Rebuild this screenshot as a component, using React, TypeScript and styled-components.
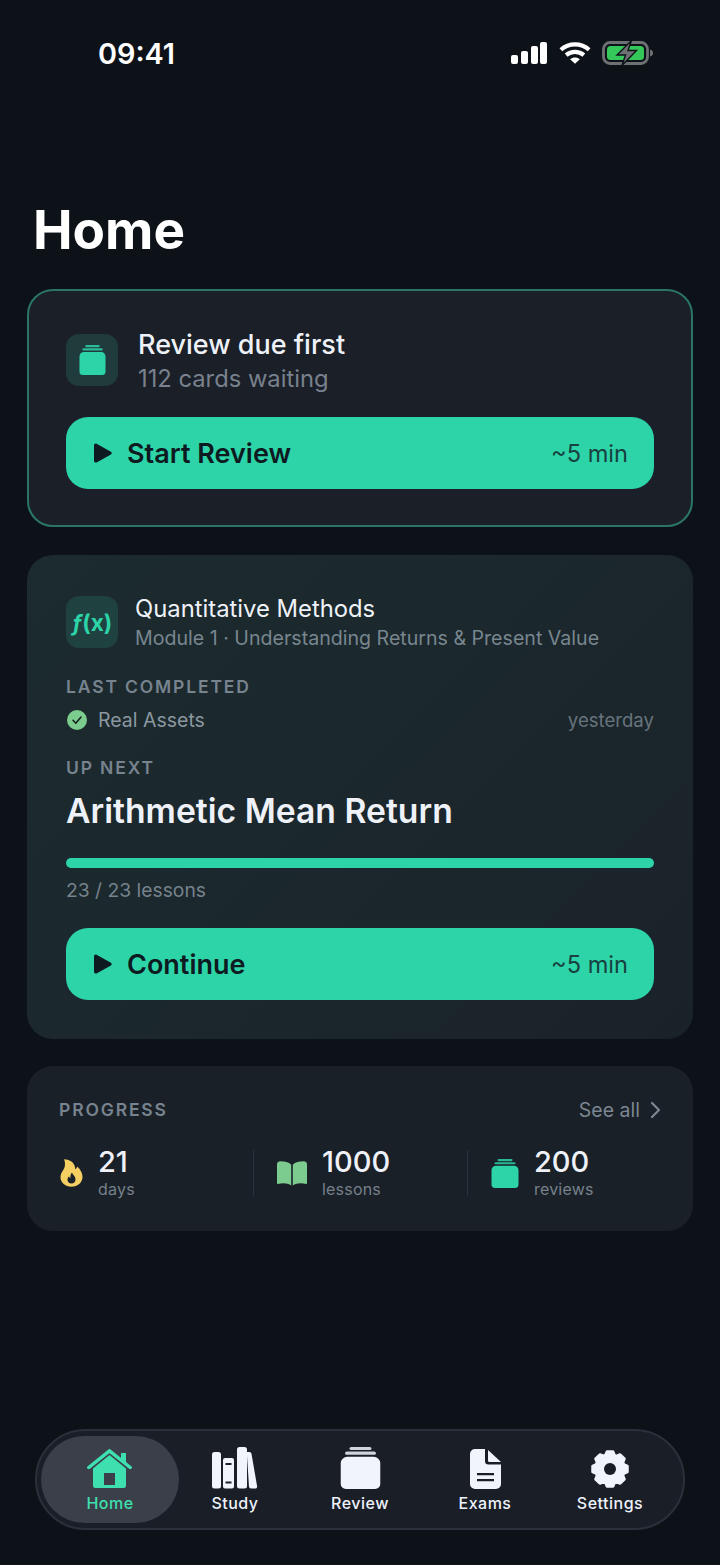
import React from "react";
import styled, { createGlobalStyle } from "styled-components";

const GlobalStyle = createGlobalStyle`
  html, body {
    margin: 0;
    padding: 0;
    background: #0d1219;
  }
  * {
    box-sizing: border-box;
  }
`;

const Screen = styled.div`
  width: 720px;
  height: 1565px;
  background: #0d1219;
  font-family: Inter, "Liberation Sans", sans-serif;
  color: #f1f4fa;
  display: flex;
  flex-direction: column;
  overflow: hidden;
`;

const StatusBar = styled.div`
  height: 106px;
  padding: 0 66px 0 98px;
  display: flex;
  align-items: center;
  justify-content: space-between;
`;

const Clock = styled.div`
  font-size: 28.8px;
  font-weight: 600;
  color: #ffffff;
`;

const StatusIcons = styled.div`
  display: flex;
  align-items: center;
  gap: 11px;
`;

const Title = styled.h1`
  margin: 0;
  height: 183px;
  padding: 94px 0 0 33px;
  font-size: 53px;
  line-height: 60px;
  font-weight: 700;
  color: #ffffff;
`;

const Cards = styled.div`
  display: flex;
  flex-direction: column;
  padding: 0 27px;
`;

const ReviewCard = styled.section`
  height: 238px;
  margin-bottom: 28px;
  padding: 36px 37px 0;
  background: #1a1f28;
  border: 2px solid #2a7564;
  border-radius: 26px;
`;

const CourseCard = styled.section`
  height: 484px;
  margin-bottom: 27px;
  padding: 37px 39px 0;
  border-radius: 26px;
  background: linear-gradient(135deg, #1c2b2f 0%, #1b272c 55%, #1a2229 100%);
`;

const HeaderRow = styled.div<{ $gap: number }>`
  display: flex;
  align-items: center;
  gap: ${({ $gap }) => $gap}px;
`;

const IconTile = styled.div<{ $bg: string }>`
  width: 52px;
  height: 52px;
  border-radius: 13px;
  background: ${({ $bg }) => $bg};
  display: flex;
  align-items: center;
  justify-content: center;
`;

const FxMark = styled.span`
  font-size: 22.5px;
  font-weight: 700;
  color: #2dd4a8;
`;

const FxLetter = styled.span`
  font-style: italic;
`;

const HeaderText = styled.div<{ $gap: number; $top: number }>`
  display: flex;
  flex-direction: column;
  gap: ${({ $gap }) => $gap}px;
  padding-top: ${({ $top }) => $top}px;
`;

const HeaderTitle = styled.div<{ $weight: number; $size: number; $line: number }>`
  font-size: ${({ $size }) => $size}px;
  font-weight: ${({ $weight }) => $weight};
  line-height: ${({ $line }) => $line}px;
  color: #eef2f8;
`;

const HeaderSub = styled.div<{ $size: number; $color: string }>`
  font-size: ${({ $size }) => $size}px;
  line-height: 28px;
  color: ${({ $color }) => $color};
`;

const ActionButton = styled.button<{ $top: number }>`
  width: 100%;
  height: 72px;
  margin-top: ${({ $top }) => $top}px;
  padding: 0 26px 0 27px;
  border: 0;
  border-radius: 22px;
  background: #2dd4a8;
  font-family: inherit;
  color: #0d1a1f;
  display: flex;
  align-items: center;
  justify-content: space-between;
`;

const ButtonLabel = styled.span`
  display: flex;
  align-items: center;
  gap: 15px;
  font-size: 27px;
  font-weight: 600;
`;

const ButtonTime = styled.span`
  font-size: 23.6px;
  font-weight: 400;
  color: #17423f;
`;

const SectionLabel = styled.div<{ $top?: number }>`
  margin-top: ${({ $top }) => $top ?? 0}px;
  font-size: 17.5px;
  line-height: 22px;
  font-weight: 600;
  letter-spacing: 1.85px;
  color: #77838f;
`;

const CompletedRow = styled.div`
  margin-top: 9px;
  height: 26px;
  display: flex;
  align-items: center;
  justify-content: space-between;
`;

const CompletedName = styled.span`
  display: flex;
  align-items: center;
  gap: 11px;
  padding-left: 1px;
  font-size: 19.5px;
  color: #8b97a1;
`;

const Muted = styled.span`
  font-size: 18.6px;
  color: #67737d;
`;

const NextTitle = styled.div`
  margin-top: 10px;
  font-size: 33.7px;
  line-height: 44px;
  font-weight: 600;
  color: #eef2f8;
`;

const Track = styled.div`
  margin-top: 25px;
  height: 10px;
  border-radius: 5px;
  background: #2dd4a8;
`;

const LessonCount = styled.div`
  margin-top: 9px;
  font-size: 19.3px;
  line-height: 26px;
  color: #76828c;
`;

const ProgressCard = styled.section`
  height: 165px;
  padding: 32px 32px 0;
  border-radius: 26px;
  background: #1a2028;
`;

const ProgressHead = styled.div`
  display: flex;
  align-items: center;
  justify-content: space-between;
`;

const SeeAll = styled.span`
  display: flex;
  align-items: center;
  gap: 10px;
  font-size: 19.5px;
  color: #7d8791;
`;

const Stats = styled.div`
  margin-top: 28px;
  display: grid;
  grid-template-columns: 194px 214px 1fr;
`;

const Stat = styled.div<{ $divider?: boolean; $pad: number }>`
  display: flex;
  align-items: center;
  gap: 15px;
  height: 46px;
  padding-left: ${({ $pad }) => $pad}px;
  border-left: ${({ $divider }) => ($divider ? "1px solid #2a323b" : "0")};
`;

const StatText = styled.div`
  display: flex;
  flex-direction: column;
`;

const StatValue = styled.div`
  font-size: 29px;
  line-height: 32px;
  font-weight: 500;
  color: #eef1f7;
`;

const StatLabel = styled.div`
  font-size: 16px;
  line-height: 23px;
  letter-spacing: 0.2px;
  color: #76808a;
`;

const Spacer = styled.div`
  flex: 1;
`;

const NavBar = styled.nav`
  margin: 0 35px 35px;
  height: 101px;
  padding: 5px 10.5px;
  border-radius: 51px;
  background: #1a1e27;
  border: 2px solid #2b303a;
  display: grid;
  grid-template-columns: repeat(5, 125px);
  align-items: stretch;
`;

const NavItem = styled.div<{ $active?: boolean }>`
  margin: ${({ $active }) => ($active ? "0 -6.5px" : "0")};
  padding-top: 11px;
  display: flex;
  flex-direction: column;
  align-items: center;
  border-radius: 44px;
  background: ${({ $active }) => ($active ? "#3a3f49" : "transparent")};
  color: ${({ $active }) => ($active ? "#3ee0b0" : "#eef2fb")};
  font-size: 16px;
  line-height: 20px;
  font-weight: 500;
  letter-spacing: 0.5px;
`;

const NavIconBox = styled.div`
  height: 42px;
  margin-bottom: 4px;
  display: flex;
  align-items: flex-end;
  justify-content: center;
`;

const SignalIcon = () => (
  <svg width="38" height="24" viewBox="0 0 38 24" fill="#fff">
    <rect x="1" y="14" width="7" height="9" rx="2" />
    <rect x="11" y="10" width="7" height="13" rx="2" />
    <rect x="21" y="5" width="7" height="18" rx="2" />
    <rect x="30" y="1" width="7" height="22" rx="2" />
  </svg>
);

const WifiIcon = () => (
  <svg width="32" height="24" viewBox="0 0 34 24" fill="none" stroke="#fff" strokeWidth="4.4">
    <path d="M2 8.500C10.500 1 23.500 1 32 8.500" />
    <path d="M7.600 14.200C13 9.600 21 9.600 26.400 14.200" />
    <path d="M17 23.500L11.800 18.600C14.800 16.200 19.200 16.200 22.200 18.600Z" fill="#fff" stroke="none" />
  </svg>
);

const BatteryIcon = () => (
  <svg width="52" height="26" viewBox="0 0 52 26">
    <rect x="1.500" y="2.500" width="44" height="21" rx="6.500" fill="none" stroke="#6d7174" strokeWidth="2.800" />
    <rect x="5" y="6" width="37" height="14" rx="3.500" fill="#34c759" />
    <path d="M48 9.500c2 .4 3 1.800 3 3.500s-1 3.100-3 3.500z" fill="#6d7174" />
    <path d="M29.500 0.500L15 15h8.500L20 25.500 34.500 10.500H26z" fill="#6d7174" stroke="#0d1219" strokeWidth="1.400" />
  </svg>
);

const StackIcon = ({ width, height, color }: { width: number; height: number; color: string }) => (
  <svg width={width} height={height} viewBox="0 0 28 30" preserveAspectRatio="none" fill={color}>
    <rect x="6.500" y="0" width="15" height="2.200" rx="1.100" opacity="0.85" />
    <rect x="3.500" y="3.300" width="21" height="2.200" rx="1.100" opacity="0.85" />
    <path d="M5 7h18a4.500 4.500 0 0 1 4.500 4.500V26.500a3.500 3.500 0 0 1-3.500 3.500H4A3.500 3.500 0 0 1 .5 26.500V11.500A4.500 4.500 0 0 1 5 7z" />
  </svg>
);

const PlayIcon = () => (
  <svg width="19" height="20" viewBox="0 0 19 20" fill="#0d1a1f">
    <path d="M1 2.200C1 .8 2.400 0 3.600.7l14.300 8c1.100.6 1.100 2.100 0 2.700l-14.300 8C2.400 20 1 19.200 1 17.800z" />
  </svg>
);

const CheckBadge = () => (
  <svg width="20" height="20" viewBox="0 0 20 20">
    <circle cx="10" cy="10" r="10" fill="#7ccb8f" />
    <path d="M6 10.300l2.800 2.900L14 7" fill="none" stroke="#11201c" strokeWidth="1.500" strokeLinecap="round" strokeLinejoin="round" />
  </svg>
);

const FlameIcon = () => (
  <svg width="23" height="28" viewBox="0 0 23 28">
    <path
      d="M4 .3C9 .5 14 3 15 8c.2 1 .1 1.700 0 2.300 1.200-.5 1.800-1.300 2.200-2.800C20.500 10.500 22.500 14 22.500 18c0 5.500-4.800 9.700-11 9.700S.5 23.500.5 18.500C.5 14 3 12 4.500 8.500 5.300 6 5.200 3 4 .3z"
      fill="#f6cf62"
    />
    <path
      d="M12 13.500c.5 2 3.500 3.500 3.500 7 0 2.500-1.800 4-4 4s-4-1.500-4-4c0-1.500.8-2.500 1.600-3.300.2 1 .7 1.500 1.400 1.700-.3-2 .2-4 1.500-5.400z"
      fill="#1a2028"
    />
  </svg>
);

const BookIcon = () => (
  <svg width="30" height="25" viewBox="0 0 30 25" fill="#7ccb8f">
    <path d="M0 3.500C0 1.500 1.500.3 3.500.3c4 0 8.500 1 10.700 3.400V24.500c-3-2.200-8-3-13.300-1.500-.5.100-.9-.2-.9-.7z" />
    <path d="M30 3.500C30 1.500 28.500.3 26.500.3c-4 0-8.500 1-10.700 3.400V24.500c3-2.200 8-3 13.300-1.500.5.100.9-.2.900-.7z" />
  </svg>
);

const ChevronIcon = () => (
  <svg width="11" height="18" viewBox="0 0 11 18" fill="none" stroke="#7d8791" strokeWidth="2.200" strokeLinecap="round" strokeLinejoin="round">
    <path d="M2 2l7 7-7 7" />
  </svg>
);

const HomeIcon = () => (
  <svg width="46" height="40" viewBox="0 0 46 40" fill="#3ee0b0">
    <path d="M34 4h5v11l-5-4z" />
    <path
      fillRule="evenodd"
      d="M22.500 6L39 19.500V36.500a2.500 2.500 0 0 1-2.500 2.500H8.500A2.500 2.500 0 0 1 6 36.500V19.500zM17 24V36H28V24z"
    />
    <path d="M1.800 18.500L22.500 1.800l20.700 16.700" fill="none" stroke="#3ee0b0" strokeWidth="3.500" strokeLinecap="round" strokeLinejoin="round" />
  </svg>
);

const BooksIcon = () => (
  <svg width="46" height="42" viewBox="0 0 46 42" fill="#f1f4fc">
    <rect x="0" y="5" width="9" height="36.500" rx="2.500" />
    <path
      fillRule="evenodd"
      d="M13 11h7a2 2 0 0 1 2 2v26.500a2 2 0 0 1-2 2h-7a2 2 0 0 1-2-2V13a2 2 0 0 1 2-2zM13.500 16v2h6v-2zM13.500 34.500v2h6v-2z"
    />
    <rect x="25" y="0" width="10" height="41.500" rx="2.500" />
    <path d="M35 5h2.500a2 2 0 0 1 2 1.700l5.500 32a2 2 0 0 1-2 2.800h-4a2 2 0 0 1-2-1.700L35 9z" />
  </svg>
);

const DocIcon = () => (
  <svg width="31" height="40" viewBox="0 0 31 40" fill="#f1f4fc">
    <path
      fillRule="evenodd"
      d="M5 0h10v12a3.500 3.500 0 0 0 3.500 3.500H31V35a5 5 0 0 1-5 5H5a5 5 0 0 1-5-5V5a5 5 0 0 1 5-5zM7 24v2.200h17V24zM7 30v2.200h17V30z"
    />
    <path d="M18 1l13 12h-11.500a1.500 1.500 0 0 1-1.500-1.500z" />
  </svg>
);

// 8 teeth, the joins get rounded by the stroke
const gearPath = () => {
  const points: string[] = [];
  for (let i = 0; i < 8; i++) {
    const mid = (i * Math.PI) / 4 - Math.PI / 2;
    [
      [14.5, -0.3],
      [17.5, -0.17],
      [17.5, 0.17],
      [14.5, 0.3],
    ].forEach(([r, off]) => {
      const x = 20 + r * Math.cos(mid + off);
      const y = 20 + r * Math.sin(mid + off);
      points.push(`${x.toFixed(2)} ${y.toFixed(2)}`);
    });
  }
  return `M${points.join("L")}Z`;
};

const GearIcon = () => (
  <svg width="40" height="40" viewBox="0 0 40 40">
    <path d={gearPath()} fill="#f1f4fc" stroke="#f1f4fc" strokeWidth="3" strokeLinejoin="round" />
    <circle cx="20" cy="20" r="6" fill="#1a1e27" />
  </svg>
);

export default function App() {
  return (
    <Screen>
      <GlobalStyle />
      <StatusBar>
        <Clock>09:41</Clock>
        <StatusIcons>
          <SignalIcon />
          <WifiIcon />
          <BatteryIcon />
        </StatusIcons>
      </StatusBar>
      <Title>Home</Title>
      <Cards>
        <ReviewCard>
          <HeaderRow $gap={20}>
            <IconTile $bg="#1f3b3b">
              <StackIcon width={27} height={30} color="#2dd4a8" />
            </IconTile>
            <HeaderText $gap={3} $top={1}>
              <HeaderTitle $weight={500} $size={27} $line={34}>Review due first</HeaderTitle>
              <HeaderSub $size={23.75} $color="#78818d">112 cards waiting</HeaderSub>
            </HeaderText>
          </HeaderRow>
          <ActionButton $top={24}>
            <ButtonLabel>
              <PlayIcon />
              Start Review
            </ButtonLabel>
            <ButtonTime>~5 min</ButtonTime>
          </ActionButton>
        </ReviewCard>

        <CourseCard>
          <HeaderRow $gap={17}>
            <IconTile $bg="#1f4240">
              <FxMark>
                <FxLetter>ƒ</FxLetter>(x)
              </FxMark>
            </IconTile>
            <HeaderText $gap={0} $top={2}>
              <HeaderTitle $weight={400} $size={23.8} $line={30}>Quantitative Methods</HeaderTitle>
              <HeaderSub $size={19.6} $color="#78868f">Module 1 · Understanding Returns &amp; Present Value</HeaderSub>
            </HeaderText>
          </HeaderRow>
          <SectionLabel $top={24}>LAST COMPLETED</SectionLabel>
          <CompletedRow>
            <CompletedName>
              <CheckBadge />
              Real Assets
            </CompletedName>
            <Muted>yesterday</Muted>
          </CompletedRow>
          <SectionLabel $top={24}>UP NEXT</SectionLabel>
          <NextTitle>Arithmetic Mean Return</NextTitle>
          <Track />
          <LessonCount>23 / 23 lessons</LessonCount>
          <ActionButton $top={25}>
            <ButtonLabel>
              <PlayIcon />
              Continue
            </ButtonLabel>
            <ButtonTime>~5 min</ButtonTime>
          </ActionButton>
        </CourseCard>

        <ProgressCard>
          <ProgressHead>
            <SectionLabel>PROGRESS</SectionLabel>
            <SeeAll>
              See all
              <ChevronIcon />
            </SeeAll>
          </ProgressHead>
          <Stats>
            <Stat $pad={1}>
              <FlameIcon />
              <StatText>
                <StatValue>21</StatValue>
                <StatLabel>days</StatLabel>
              </StatText>
            </Stat>
            <Stat $divider $pad={23}>
              <BookIcon />
              <StatText>
                <StatValue>1000</StatValue>
                <StatLabel>lessons</StatLabel>
              </StatText>
            </Stat>
            <Stat $divider $pad={23}>
              <StackIcon width={28} height={29} color="#2dd4a8" />
              <StatText>
                <StatValue>200</StatValue>
                <StatLabel>reviews</StatLabel>
              </StatText>
            </Stat>
          </Stats>
        </ProgressCard>
      </Cards>
      <Spacer />
      <NavBar>
        <NavItem $active>
          <NavIconBox>
            <HomeIcon />
          </NavIconBox>
          Home
        </NavItem>
        <NavItem>
          <NavIconBox>
            <BooksIcon />
          </NavIconBox>
          Study
        </NavItem>
        <NavItem>
          <NavIconBox>
            <StackIcon width={41} height={42} color="#f1f4fc" />
          </NavIconBox>
          Review
        </NavItem>
        <NavItem>
          <NavIconBox>
            <DocIcon />
          </NavIconBox>
          Exams
        </NavItem>
        <NavItem>
          <NavIconBox>
            <GearIcon />
          </NavIconBox>
          Settings
        </NavItem>
      </NavBar>
    </Screen>
  );
}
